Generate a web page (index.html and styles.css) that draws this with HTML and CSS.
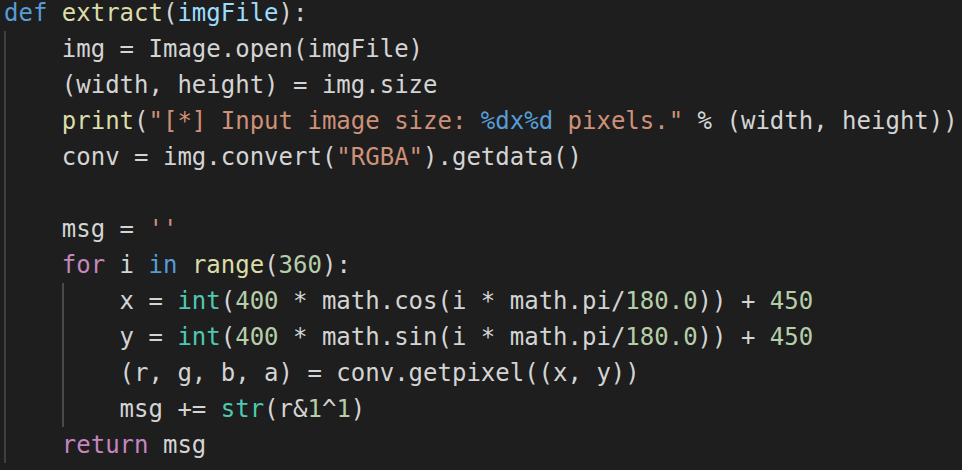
FILE: index.html
```html
<!DOCTYPE html>
<html>
<head>
<meta charset="utf-8">
<link rel="stylesheet" href="styles.css">
</head>
<body>
<div class="editor">
<div class="line"><span class="kw">def</span> <span class="fn">extract</span>(<span class="pa">imgFile</span>):</div>
<div class="block">
<div class="line">img = Image.open(imgFile)</div>
<div class="line">(width, height) = img.size</div>
<div class="line"><span class="fn">print</span>(<span class="st">"[*] Input image size: </span><span class="kw">%dx%d</span><span class="st"> pixels."</span> % (width, height))</div>
<div class="line">conv = img.convert(<span class="st">"RGBA"</span>).getdata()</div>
<div class="line"> </div>
<div class="line">msg = <span class="st">''</span></div>
<div class="line"><span class="ctl">for</span> i <span class="kw">in</span> <span class="fn">range</span>(<span class="nu">360</span>):</div>
<div class="block">
<div class="line">x = <span class="ty">int</span>(<span class="nu">400</span> * math.cos(i * math.pi/<span class="nu">180.0</span>)) + <span class="nu">450</span></div>
<div class="line">y = <span class="ty">int</span>(<span class="nu">400</span> * math.sin(i * math.pi/<span class="nu">180.0</span>)) + <span class="nu">450</span></div>
<div class="line">(r, g, b, a) = conv.getpixel((x, y))</div>
<div class="line">msg += <span class="ty">str</span>(r&amp;<span class="nu">1</span>^<span class="nu">1</span>)</div>
</div>
<div class="line"><span class="ctl">return</span> msg</div>
</div>
</div>
</body>
</html>
```
FILE: styles.css
```css
html, body {
  margin: 0;
  padding: 0;
  background: #1e1e1e;
  overflow: hidden;
}
.editor {
  margin-top: -5px;
  padding-left: 4px;
  font-family: "DejaVu Sans Mono", "Liberation Mono", monospace;
  font-size: 24px;
  line-height: 36px;
  color: #d4d4d4;
}
.line {
  height: 36px;
  white-space: pre;
}
.block {
  padding-left: 4ch;
  background: linear-gradient(#404040, #404040) no-repeat 0 0 / 2px 100%;
}
.block .block {
  background-image: linear-gradient(#4a4a4a, #4a4a4a);
}
.kw { color: #569cd6; }
.fn { color: #dcdcaa; }
.pa { color: #9cdcfe; }
.st { color: #ce9178; }
.ctl { color: #c586c0; }
.ty { color: #4ec9b0; }
.nu { color: #b5cea8; }
```
